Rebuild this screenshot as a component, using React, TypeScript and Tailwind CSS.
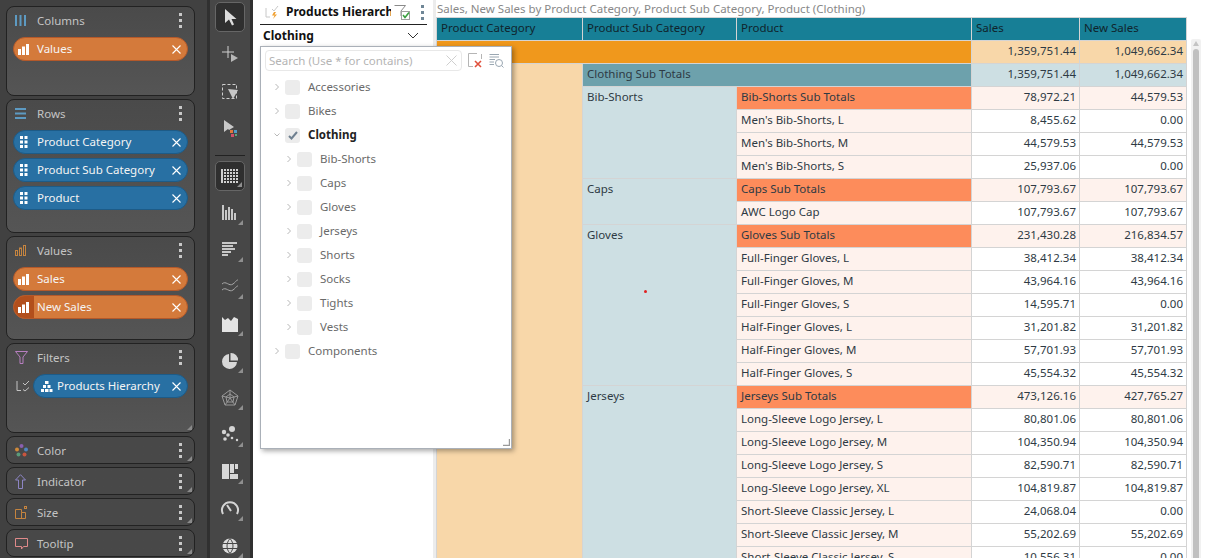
import type { ReactNode } from "react";

const Corner = () => (
  <span className="absolute right-[2px] bottom-[2px] h-0 w-0 border-b-[5px] border-l-[5px] border-b-[#8a8a8a] border-l-transparent" />
);

const Kebab = ({ color = "bg-[#c8c8c8]" }: { color?: string }) => (
  <span className="flex flex-col gap-[3px]">
    <span className={`h-[3px] w-[3px] ${color}`} />
    <span className={`h-[3px] w-[3px] ${color}`} />
    <span className={`h-[3px] w-[3px] ${color}`} />
  </span>
);

const BarsIcon = () => (
  <svg width="12" height="11" viewBox="0 0 12 11" fill="#fff">
    <rect x="0" y="5" width="3" height="6" />
    <rect x="4" y="2.5" width="3" height="8.5" />
    <rect x="8" y="0" width="3" height="11" />
  </svg>
);

const DotsIcon = () => (
  <svg width="9" height="12" viewBox="0 0 9 12" fill="#fff">
    {[0, 4.5, 9].map((y) => (
      <g key={y}>
        <rect x="0" y={y} width="3" height="3" />
        <rect x="4.5" y={y} width="3" height="3" />
      </g>
    ))}
  </svg>
);

const PyramidIcon = () => (
  <svg width="12" height="11" viewBox="0 0 12 11" fill="#fff">
    <rect x="4" y="0" width="3.5" height="3" />
    <rect x="2" y="4" width="3" height="3" />
    <rect x="6.5" y="4" width="3" height="3" />
    <rect x="0" y="8" width="3" height="3" />
    <rect x="4" y="8" width="3.5" height="3" />
    <rect x="8.5" y="8" width="3" height="3" />
  </svg>
);

const Pill = ({ label, tone, icon, active }: { label: string; tone: "orange" | "blue"; icon: ReactNode; active?: boolean }) => (
  <div
    className={`flex h-[24px] items-center overflow-hidden rounded-full border text-[11.5px] text-[#f4f4f4] ${
      tone === "orange" ? "border-[#b4592a] bg-[#d47a3b]" : "border-[#1d5b87] bg-[#2870a3]"
    }`}
  >
    <span className={`flex h-full w-[20px] shrink-0 items-center justify-center ${active ? "bg-[#b24f1c]" : ""}`}>{icon}</span>
    <span className="flex-1 truncate pl-[3px]">{label}</span>
    <svg width="9" height="9" viewBox="0 0 9 9" className="mr-[6px] shrink-0" stroke="#fff" strokeWidth="1.1">
      <path d="M0.5 0.5 8.5 8.5M8.5 0.5 0.5 8.5" />
    </svg>
  </div>
);

const Card = ({ title, icon, className, corner, children }: { title: string; icon: ReactNode; className: string; corner?: boolean; children?: ReactNode }) => (
  <section className={`relative shrink-0 rounded-[8px] border border-[#222222] bg-gradient-to-b from-[#4a4a4a] to-[#555555] px-[6px] ${className}`}>
    <header className="flex h-[27px] items-center">
      <span className="flex w-[24px] shrink-0 justify-start pl-[2px]">{icon}</span>
      <span className="flex-1 text-[11.5px] text-[#c4c4c4]">{title}</span>
      <span className="mr-[6px]">
        <Kebab />
      </span>
    </header>
    {children && <div className="mt-[3px] flex flex-col gap-[4px]">{children}</div>}
    {corner && <Corner />}
  </section>
);

const LeftPanel = () => (
  <aside className="flex h-full w-[207px] shrink-0 flex-col gap-[3px] bg-[#414141] pt-[6px] pl-[6px] pr-[12px]">
    <Card
      title="Columns"
      className="h-[90px]"
      icon={
        <svg width="11" height="11" viewBox="0 0 11 11" fill="#5d9ac2">
          <rect x="0" width="2" height="11" />
          <rect x="4.5" width="2" height="11" />
          <rect x="9" width="2" height="11" />
        </svg>
      }
    >
      <Pill label="Values" tone="orange" icon={<BarsIcon />} />
    </Card>
    <Card
      title="Rows"
      className="h-[134px]"
      icon={
        <svg width="11" height="11" viewBox="0 0 11 11" fill="#5d9ac2">
          <rect y="0" width="11" height="2" />
          <rect y="4.5" width="11" height="2" />
          <rect y="9" width="11" height="2" />
        </svg>
      }
    >
      <Pill label="Product Category" tone="blue" icon={<DotsIcon />} />
      <Pill label="Product Sub Category" tone="blue" icon={<DotsIcon />} />
      <Pill label="Product" tone="blue" icon={<DotsIcon />} />
    </Card>
    <Card
      title="Values"
      className="h-[104px]"
      icon={
        <svg width="12" height="11" viewBox="0 0 12 11" fill="none" stroke="#c5843f">
          <rect x="0.5" y="5.5" width="2" height="5" />
          <rect x="4.5" y="3" width="2" height="7.5" />
          <rect x="8.5" y="0.5" width="2" height="10" />
        </svg>
      }
    >
      <Pill label="Sales" tone="orange" icon={<BarsIcon />} />
      <Pill label="New Sales" tone="orange" icon={<BarsIcon />} active />
    </Card>
    <Card
      title="Filters"
      className="h-[90px]"
      corner
      icon={
        <svg width="13" height="13" viewBox="0 0 13 13" fill="none" stroke="#b77fc0">
          <path d="M0.5 0.5H12.5L8 6V12.5H5V6Z" />
        </svg>
      }
    >
      <div className="flex items-center">
        <svg width="14" height="12" viewBox="0 0 14 12" fill="none" stroke="#c4c4c4" className="ml-[3px] mr-[3px] shrink-0">
          <path d="M1 1V10.5H5M7 3 9 5 13 1M7 9.5 9 11 13 7.5" />
        </svg>
        <div className="flex-1">
          <Pill label="Products Hierarchy" tone="blue" icon={<span className="ml-[5px]"><PyramidIcon /></span>} />
        </div>
      </div>
    </Card>
    {[
      {
        title: "Color",
        icon: (
          <svg width="13" height="13" viewBox="0 0 13 13">
            <circle cx="6.5" cy="2" r="2" fill="#8a5fb0" />
            <circle cx="2" cy="5.5" r="2" fill="#d08a3a" />
            <circle cx="11" cy="5.5" r="2" fill="#4f86c0" />
            <circle cx="3.5" cy="10.5" r="2" fill="#5a9a7a" />
            <circle cx="9.5" cy="10.5" r="2" fill="#c8553f" />
          </svg>
        ),
      },
      {
        title: "Indicator",
        icon: (
          <svg width="11" height="15" viewBox="0 0 11 15" fill="none" stroke="#8d85c4">
            <path d="M5.5 0.7 10.5 6H7.5V14.5H3.5V6H0.5Z" />
          </svg>
        ),
      },
      {
        title: "Size",
        icon: (
          <svg width="13" height="13" viewBox="0 0 13 13" fill="none" stroke="#c5843f">
            <path d="M0.5 3.5H6.5V6.5H10.5V12.5H0.5ZM6.5 6.5V12.5" />
            <rect x="9.5" y="0.5" width="2" height="2" />
          </svg>
        ),
      },
      {
        title: "Tooltip",
        icon: (
          <svg width="13" height="12" viewBox="0 0 13 12" fill="none" stroke="#e08a8a">
            <path d="M0.5 0.5H12.5V8.5H8.5L6.5 11V8.5H0.5Z" />
          </svg>
        ),
      },
    ].map((c) => (
      <Card key={c.title} title={c.title} icon={c.icon} corner className="h-[28px] !from-[#484848] !to-[#484848]" />
    ))}
  </aside>
);

const toolIcons: { key: string; selected?: boolean; tri?: boolean; node: ReactNode }[] = [
  { key: "pointer", selected: true, node: <path d="M5 2V16L9 12.5 12 18.5 14 17.5 11.5 12H16.5Z" fill="#dcdcdc" /> },
  {
    key: "add",
    node: (
      <g>
        <path d="M8 2V14M2 8H14" stroke="#d0d0d0" fill="none" />
        <path d="M11 10 18 14 11 18Z" fill="#b8b8b8" />
      </g>
    ),
  },
  {
    key: "marquee",
    node: (
      <g>
        <rect x="2.5" y="3.5" width="14" height="14" fill="none" stroke="#d0d0d0" strokeDasharray="3 2" />
        <path d="M8 8 18 9 13 18Z" fill="#c8c8c8" />
      </g>
    ),
  },
  {
    key: "colorPointer",
    node: (
      <g>
        <path d="M4 2V14L8 11 9 12 14 9Z" fill="#c8c8c8" />
        <rect x="10" y="12" width="3" height="3" fill="#e0783c" />
        <rect x="14" y="12" width="3" height="3" fill="#4f9ac8" />
        <rect x="11" y="16" width="3" height="3" fill="#d0506a" />
        <rect x="15" y="16" width="2" height="2" fill="#5aa97a" />
      </g>
    ),
  },
  {
    key: "grid",
    selected: true,
    tri: true,
    node: (
      <g fill="#d0d0d0">
        {[3, 6, 9, 12, 15].map((y) =>
          [4, 7, 10, 13, 16].map((x) => <rect key={`${x}-${y}`} x={x} y={y} width="2" height="2" />)
        )}
        <rect x="1" y="3" width="2" height="14" />
      </g>
    ),
  },
  {
    key: "bars",
    tri: true,
    node: (
      <g fill="#c8c8c8">
        <rect x="2" y="2" width="2" height="15" />
        <rect x="5" y="7" width="2" height="10" />
        <rect x="8" y="4" width="2" height="13" />
        <rect x="11" y="6" width="2" height="11" />
        <rect x="14" y="10" width="2" height="7" />
      </g>
    ),
  },
  {
    key: "hbars",
    tri: true,
    node: (
      <g fill="#c8c8c8">
        <rect x="2" y="2" width="15" height="2" />
        <rect x="2" y="5" width="11" height="2" />
        <rect x="2" y="8" width="13" height="2" />
        <rect x="2" y="11" width="9" height="2" />
        <rect x="2" y="14" width="6" height="2" />
      </g>
    ),
  },
  {
    key: "lines",
    tri: true,
    node: <path d="M2 7C6 3 9 10 13 7S16 3 18 3M2 13C6 9 9 16 13 13S16 9 18 9" fill="none" stroke="#a8a8a8" />,
  },
  { key: "area", tri: true, node: <path d="M2 3 5 6 8 4 11 7 14 3 18 5V18H2Z" fill="#e4e4e4" /> },
  {
    key: "pie",
    tri: true,
    node: (
      <g fill="#d8d8d8">
        <path d="M9 3A7.5 7.5 0 1 0 17 11H9Z" />
        <path d="M10.5 2A7 7 0 0 1 18 9.5H10.5Z" />
      </g>
    ),
  },
  {
    key: "radar",
    tri: true,
    node: <path d="M10 2 18 8 15 17H5L2 8ZM10 6 14 9 13 14H7L6 9ZM10 2V10M18 8 10 10M15 17 10 10M5 17 10 10M2 8 10 10" fill="none" stroke="#9a9a9a" />,
  },
  {
    key: "scatter",
    tri: true,
    node: (
      <g fill="#d4d4d4">
        <circle cx="4" cy="7" r="2.2" />
        <circle cx="12" cy="4" r="3" />
        <circle cx="8" cy="10" r="1.8" />
        <circle cx="5" cy="14" r="1.8" />
        <circle cx="12" cy="13" r="1.3" />
        <circle cx="17" cy="15" r="1.2" />
      </g>
    ),
  },
  {
    key: "treemap",
    tri: true,
    node: (
      <g fill="#d8d8d8">
        <rect x="2" y="2" width="7" height="15" />
        <rect x="10" y="2" width="4" height="9" />
        <rect x="15" y="2" width="3" height="5" />
        <rect x="10" y="12" width="8" height="5" />
      </g>
    ),
  },
  {
    key: "gauge",
    tri: true,
    node: (
      <g fill="none" stroke="#d4d4d4" strokeWidth="2">
        <path d="M3 15A8 8 0 1 1 17 15" />
        <path d="M7 6 11 12" />
      </g>
    ),
  },
  {
    key: "globe",
    tri: true,
    node: (
      <g>
        <circle cx="10" cy="10" r="7.5" fill="#dcdcdc" />
        <path d="M2.5 7.5H17.5M2.5 12.5H17.5M10 2.5C6 7 6 13 10 17.5C14 13 14 7 10 2.5Z" fill="none" stroke="#474747" />
      </g>
    ),
  },
];

const Toolbar = () => (
  <nav className="flex h-full w-[46px] shrink-0 flex-col items-center border-x-[3px] border-x-[#303030] bg-[#474747] pt-[2px]">
    {toolIcons.map((t) => (
      <div key={t.key} className="flex flex-col items-center">
        {t.key === "grid" && <div className="mt-[5px] mb-[5px] h-px w-[30px] bg-[#222222]" />}
        <div
          className={`relative mb-[7px] flex h-[30px] w-[30px] items-center justify-center rounded-[5px] ${
            t.selected ? "border border-[#666666] bg-[#2f2f2f]" : ""
          }`}
        >
          <svg width="20" height="20" viewBox="0 0 20 20">
            {t.node}
          </svg>
          {t.tri && <span className="absolute right-[2px] bottom-[3px] h-0 w-0 border-b-[5px] border-l-[5px] border-b-[#8f8f8f] border-l-transparent" />}
        </div>
      </div>
    ))}
  </nav>
);

const Check = ({ checked }: { checked?: boolean }) => (
  <span className="flex h-[15px] w-[15px] shrink-0 items-center justify-center rounded-[3px] bg-[#ececec]">
    {checked && (
      <svg width="10" height="9" viewBox="0 0 10 9" fill="none" stroke="#6f8090" strokeWidth="2">
        <path d="M1 5 3.5 7.5 9 1" />
      </svg>
    )}
  </span>
);

const treeItems = [
  { label: "Accessories", level: 0 },
  { label: "Bikes", level: 0 },
  { label: "Clothing", level: 0, open: true, checked: true },
  { label: "Bib-Shorts", level: 1 },
  { label: "Caps", level: 1 },
  { label: "Gloves", level: 1 },
  { label: "Jerseys", level: 1 },
  { label: "Shorts", level: 1 },
  { label: "Socks", level: 1 },
  { label: "Tights", level: 1 },
  { label: "Vests", level: 1 },
  { label: "Components", level: 0 },
];

const FilterPopup = () => (
  <div className="absolute top-[46px] left-[7px] z-10 flex h-[403px] w-[252px] flex-col border border-[#aab0b8] bg-white pt-[3px] pl-[4px] shadow-[2px_2px_5px_rgba(0,0,0,0.35)]">
    <div className="flex items-center">
      <div className="flex h-[21px] w-[197px] items-center justify-between rounded-[4px] border border-[#e8e8e8] pr-[4px] pl-[3px] text-[11.5px] text-[#b4b4b4]">
        <span>Search (Use * for contains)</span>
        <svg width="11" height="11" viewBox="0 0 11 11" stroke="#cfcfcf">
          <path d="M0.5 0.5 10.5 10.5M10.5 0.5 0.5 10.5" />
        </svg>
      </div>
      <svg width="15" height="15" viewBox="0 0 15 15" className="ml-[6px]" fill="none">
        <path d="M9 0.5H0.5V13.5H5" stroke="#b5b5b5" />
        <path d="M7 8 13 14M13 8 7 14" stroke="#e0503c" strokeWidth="1.6" />
        <path d="M13.5 1V6" stroke="#b5b5b5" />
      </svg>
      <svg width="15" height="15" viewBox="0 0 15 15" className="ml-[6px]" fill="none" stroke="#9aa7b2">
        <path d="M0.5 1.5H10M0.5 4H10M0.5 6.5H6M0.5 9H5M0.5 11.5H5" />
        <circle cx="10" cy="10" r="3.5" />
        <path d="M12.5 12.5 14.5 14.5" />
      </svg>
    </div>
    <ul className="mt-[4px] flex flex-col">
      {treeItems.map((item) => (
        <li
          key={item.label}
          className={`flex h-[24px] items-center text-[11.5px] ${item.checked ? "font-bold text-[#222222]" : "text-[#6a6a6a]"} ${
            item.level ? "pl-[21px]" : "pl-[9px]"
          }`}
        >
          <svg width="6" height="8" viewBox="0 0 6 8" fill="none" stroke="#b8b8b8" className="mr-[5px] shrink-0">
            {item.open ? <path d="M0.5 2.5 3 5 5.5 2.5" /> : <path d="M1.5 1 4.5 4 1.5 7" />}
          </svg>
          <Check checked={item.checked} />
          <span className="ml-[8px]">{item.label}</span>
        </li>
      ))}
    </ul>
    <svg width="7" height="7" viewBox="0 0 7 7" fill="none" stroke="#9a9a9a" className="absolute right-[1px] bottom-[2px]">
      <path d="M0 6.5H6.5V0" strokeWidth="1.4" />
    </svg>
  </div>
);

const FilterPanel = () => (
  <div className="relative h-full w-[183px] shrink-0 border-r-[3px] border-r-[#ececec] bg-white">
    <div className="ml-[7px] mr-[6px] flex h-[25px] items-center border-b border-b-[#222222]">
      <svg width="14" height="14" viewBox="0 0 14 14" fill="none" className="ml-[5px] shrink-0">
        <path d="M1 3V12H5M7 4 9 6 13 1" stroke="#c8c8c8" />
        <path d="M9 7 7 10.5H9.5L8 14 12 9.5H9.5L11 7Z" fill="#f0a030" />
      </svg>
      <span className="ml-[7px] w-[105px] shrink-0 overflow-hidden whitespace-nowrap text-[12px] font-bold text-[#111111]">Products Hierarchy</span>
      <svg width="17" height="17" viewBox="0 0 17 17" fill="none" className="ml-[3px] shrink-0">
        <path d="M0.5 1.5H11.5L7 7V12" stroke="#8a8a8a" />
        <rect x="7.5" y="7.5" width="8" height="8" fill="#fff" stroke="#a0a0a0" />
        <path d="M9 11 11 13.5 15 8.5" stroke="#3aa040" strokeWidth="1.6" />
      </svg>
      <span className="ml-[10px]">
        <Kebab color="bg-[#6f8696]" />
      </span>
    </div>
    <div className="flex h-[21px] items-center justify-between pr-[14px] pl-[10px] text-[12px] font-bold text-[#111111]">
      <span>Clothing</span>
      <svg width="12" height="7" viewBox="0 0 12 7" fill="none" stroke="#333333">
        <path d="M1 1 6 6 11 1" />
      </svg>
    </div>
    <FilterPopup />
  </div>
);

type Row = { product: string; sales: string; newSales: string; sub?: boolean };
type Group = { name: string; rows: Row[] };

const groups: Group[] = [
  {
    name: "Bib-Shorts",
    rows: [
      { product: "Bib-Shorts Sub Totals", sales: "78,972.21", newSales: "44,579.53", sub: true },
      { product: "Men's Bib-Shorts, L", sales: "8,455.62", newSales: "0.00" },
      { product: "Men's Bib-Shorts, M", sales: "44,579.53", newSales: "44,579.53" },
      { product: "Men's Bib-Shorts, S", sales: "25,937.06", newSales: "0.00" },
    ],
  },
  {
    name: "Caps",
    rows: [
      { product: "Caps Sub Totals", sales: "107,793.67", newSales: "107,793.67", sub: true },
      { product: "AWC Logo Cap", sales: "107,793.67", newSales: "107,793.67" },
    ],
  },
  {
    name: "Gloves",
    rows: [
      { product: "Gloves Sub Totals", sales: "231,430.28", newSales: "216,834.57", sub: true },
      { product: "Full-Finger Gloves, L", sales: "38,412.34", newSales: "38,412.34" },
      { product: "Full-Finger Gloves, M", sales: "43,964.16", newSales: "43,964.16" },
      { product: "Full-Finger Gloves, S", sales: "14,595.71", newSales: "0.00" },
      { product: "Half-Finger Gloves, L", sales: "31,201.82", newSales: "31,201.82" },
      { product: "Half-Finger Gloves, M", sales: "57,701.93", newSales: "57,701.93" },
      { product: "Half-Finger Gloves, S", sales: "45,554.32", newSales: "45,554.32" },
    ],
  },
  {
    name: "Jerseys",
    rows: [
      { product: "Jerseys Sub Totals", sales: "473,126.16", newSales: "427,765.27", sub: true },
      { product: "Long-Sleeve Logo Jersey, L", sales: "80,801.06", newSales: "80,801.06" },
      { product: "Long-Sleeve Logo Jersey, M", sales: "104,350.94", newSales: "104,350.94" },
      { product: "Long-Sleeve Logo Jersey, S", sales: "82,590.71", newSales: "82,590.71" },
      { product: "Long-Sleeve Logo Jersey, XL", sales: "104,819.87", newSales: "104,819.87" },
      { product: "Short-Sleeve Classic Jersey, L", sales: "24,068.04", newSales: "0.00" },
      { product: "Short-Sleeve Classic Jersey, M", sales: "55,202.69", newSales: "55,202.69" },
      { product: "Short-Sleeve Classic Jersey, S", sales: "10,556.31", newSales: "0.00" },
    ],
  },
];

const rowCount = groups.reduce((n, g) => n + g.rows.length, 0) + 1;
const cell = "border border-[#d4d4d4] pl-[4px] pr-[3px] align-top leading-[20px] whitespace-nowrap overflow-hidden";
const num = `${cell} text-right`;

const Sheet = () => (
  <main className="relative min-w-0 flex-1 overflow-hidden bg-white">
    <p className="h-[16px] pt-px pl-[1px] text-[11.5px] leading-[16px] text-[#888888]">
      Sales, New Sales by Product Category, Product Sub Category, Product (Clothing)
    </p>
    <div className="flex items-start">
      <table className="mt-[1px] w-[750px] shrink-0 table-fixed border-collapse text-[11.5px] text-[#2e3a44]">
        <colgroup>
          <col className="w-[146px]" />
          <col className="w-[154px]" />
          <col className="w-[235px]" />
          <col className="w-[108px]" />
          <col className="w-[107px]" />
        </colgroup>
        <thead>
          <tr className="h-[23px] bg-[#177f96] text-left text-[#10242c]">
            <th className={`${cell} font-normal`}>Product Category</th>
            <th className={`${cell} font-normal`}>Product Sub Category</th>
            <th className={`${cell} font-normal`}>Product</th>
            <th className={`${cell} font-normal`}>Sales</th>
            <th className={`${cell} font-normal`}>New Sales</th>
          </tr>
        </thead>
        <tbody>
          <tr className="h-[23px]">
            <td colSpan={3} className={`${cell} bg-[#f0981c]`} />
            <td className={`${num} bg-[#f8d7a9]`}>1,359,751.44</td>
            <td className={`${num} bg-[#f8d7a9]`}>1,049,662.34</td>
          </tr>
          <tr className="h-[23px]">
            <td rowSpan={rowCount} className={`${cell} bg-[#f8d7a9]`} />
            <td colSpan={2} className={`${cell} bg-[#6da1ac]`}>Clothing Sub Totals</td>
            <td className={`${num} bg-[#cddfe3]`}>1,359,751.44</td>
            <td className={`${num} bg-[#cddfe3]`}>1,049,662.34</td>
          </tr>
          {groups.map((g) =>
            g.rows.map((r, i) => (
              <tr key={r.product} className="h-[23px]">
                {i === 0 && (
                  <td rowSpan={g.rows.length} className={`${cell} bg-[#cddfe3]`}>
                    {g.name}
                  </td>
                )}
                <td className={`${cell} ${r.sub ? "bg-[#fd8c5b]" : "bg-[#fef2ed]"}`}>{r.product}</td>
                <td className={`${num} ${r.sub ? "bg-[#fef2ed]" : "bg-white"}`}>{r.sales}</td>
                <td className={`${num} ${r.sub ? "bg-[#fef2ed]" : "bg-white"}`}>{r.newSales}</td>
              </tr>
            ))
          )}
        </tbody>
      </table>
      <div className="mt-[23px] ml-[4px] flex h-[600px] w-[10px] shrink-0 flex-col items-center rounded-[2px] bg-[#f1f1f1] pt-[2px]">
        <span className="h-0 w-0 border-x-[3px] border-b-[5px] border-x-transparent border-b-[#c4c4c4]" />
        <span className="mt-[3px] h-full w-[6px] rounded-[3px] bg-[#c0c0c0]" />
      </div>
    </div>
    <span className="absolute top-[290px] left-[208px] h-[3px] w-[3px] rounded-full bg-[#e02020]" />
  </main>
);

const App = () => (
  <div className="flex h-[558px] w-[1205px] overflow-hidden bg-white font-['Noto_Sans',sans-serif]">
    <LeftPanel />
    <Toolbar />
    <FilterPanel />
    <Sheet />
  </div>
);

export default App;
